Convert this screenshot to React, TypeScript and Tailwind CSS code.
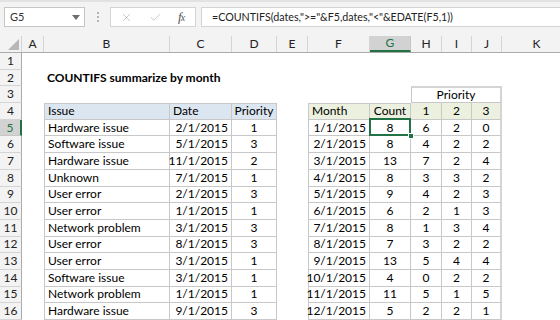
import { Check, X } from "lucide-react";

type Align = "left" | "center" | "right";

const COLS = ["A", "B", "C", "D", "E", "F", "G", "H", "I", "J", "K"];
const GRID =
  "grid grid-cols-[22px_22px_126px_62px_45px_31px_62px_41px_31px_30px_30px_70px]";

const issues: [string, string, number][] = [
  ["Hardware issue", "2/1/2015", 1],
  ["Software issue", "5/1/2015", 3],
  ["Hardware issue", "11/1/2015", 2],
  ["Unknown", "7/1/2015", 1],
  ["User error", "2/1/2015", 3],
  ["User error", "1/1/2015", 1],
  ["Network problem", "3/1/2015", 3],
  ["User error", "8/1/2015", 3],
  ["User error", "3/1/2015", 1],
  ["Software issue", "3/1/2015", 1],
  ["Network problem", "1/1/2015", 1],
  ["Hardware issue", "9/1/2015", 3],
];

const months: [string, number, number, number, number][] = [
  ["1/1/2015", 8, 6, 2, 0],
  ["2/1/2015", 8, 4, 2, 2],
  ["3/1/2015", 13, 7, 2, 4],
  ["4/1/2015", 8, 3, 3, 2],
  ["5/1/2015", 9, 4, 2, 3],
  ["6/1/2015", 6, 2, 1, 3],
  ["7/1/2015", 8, 1, 3, 4],
  ["8/1/2015", 7, 3, 2, 2],
  ["9/1/2015", 13, 5, 4, 4],
  ["10/1/2015", 4, 0, 2, 2],
  ["11/1/2015", 11, 5, 1, 5],
  ["12/1/2015", 5, 2, 2, 1],
];

const alignCls: Record<Align, string> = {
  left: "justify-start pl-[3px]",
  center: "justify-center",
  right: "justify-end pr-[3px]",
};

function Cell({
  children,
  align = "left",
  className = "",
}: {
  children?: React.ReactNode;
  align?: Align;
  className?: string;
}) {
  return (
    <div
      className={`relative flex items-center whitespace-nowrap min-w-0 leading-none ${alignCls[align]} ${className}`}
    >
      {children}
    </div>
  );
}

function RowHead({ n, active }: { n: number; active?: boolean }) {
  return (
    <div
      className={`flex items-center justify-center border-b text-[12px] leading-none ${
        active
          ? "bg-[#d2d2d2] text-[#217346] border-r-2 border-r-[#217346] border-b-[#c6c6c6]"
          : "bg-[#f3f3f3] text-[#222] border-r border-r-[#ababab] border-b-[#d4d4d4]"
      }`}
    >
      {n}
    </div>
  );
}

const B = "border-[#c8c8c8]";

function Row({ n, children, active }: { n: number; children: React.ReactNode; active?: boolean }) {
  return (
    <div className={`${GRID} h-[16.7px]`}>
      <RowHead n={n} active={active} />
      {children}
    </div>
  );
}

function Empty({ count }: { count: number }) {
  return (
    <>
      {Array.from({ length: count }).map((_, i) => (
        <Cell key={i} />
      ))}
    </>
  );
}

export default function App() {
  return (
    <div className="w-[560px] h-[320px] overflow-hidden bg-white font-['Lato',sans-serif] text-[12px] text-black">
      {/* formula bar */}
      <div className="h-[36px] bg-[#f3f3f3] border-t-2 border-[#e2e2e2] flex items-start pt-[5px]">
        <div className="ml-[4px] w-[81px] h-[20px] bg-white border border-[#c6c6c6] flex items-center justify-between pl-[5px] pr-[4px]">
          <span className="text-[11px] text-[#333]">G5</span>
          <svg width="8" height="5" viewBox="0 0 8 5">
            <path d="M0 0h8L4 5z" fill="#6d6d6d" />
          </svg>
        </div>
        <div className="w-[25px] h-[20px] flex flex-col items-center justify-center gap-[2px]">
          <span className="w-[2px] h-[2px] bg-[#b5b5b5]" />
          <span className="w-[2px] h-[2px] bg-[#b5b5b5]" />
          <span className="w-[2px] h-[2px] bg-[#b5b5b5]" />
        </div>
        <div className="w-[86px] h-[20px] bg-white border border-[#d4d4d4] flex items-center pl-[9px] gap-[16px] text-[#b3b3b3]">
          <X size={13} strokeWidth={1.3} />
          <Check size={13} strokeWidth={1.3} />
          <span className="font-['Liberation_Serif',serif] italic text-[13px] text-[#555] tracking-[-1px]">
            f<span className="text-[10px]">x</span>
          </span>
        </div>
        <div className="ml-[5px] flex-1 h-[20px] bg-white border border-[#d4d4d4] border-r-0 flex items-center pl-[10px] text-[10.7px] text-[#222]">
          =COUNTIFS(dates,"&gt;="&amp;F5,dates,"&lt;"&amp;EDATE(F5,1))
        </div>
      </div>

      {/* column headers */}
      <div className={`${GRID} h-[17px] bg-[#f3f3f3] border-b border-[#ababab] text-[12px] leading-none text-[#222]`}>
        <div className="flex items-end justify-end pr-[2px] pb-[2px] border-r border-[#d4d4d4]">
          <svg width="11" height="11" viewBox="0 0 11 11">
            <path d="M11 0V11H0z" fill="#b7b7b7" />
          </svg>
        </div>
        {COLS.map((c) => (
          <div
            key={c}
            className={`flex items-center justify-center border-r ${
              c === "G"
                ? "bg-[#d2d2d2] text-[#217346] border-[#c6c6c6] border-b-2 border-b-[#217346]"
                : "border-[#d4d4d4]"
            }`}
          >
            {c}
          </div>
        ))}
      </div>

      <Row n={1}>
        <Empty count={11} />
      </Row>
      <Row n={2}>
        <Cell />
        <Cell className="overflow-visible z-10 font-bold">COUNTIFS summarize by month</Cell>
        <Empty count={9} />
      </Row>
      <Row n={3}>
        <Empty count={7} />
        <Cell
          align="center"
          className={`col-span-3 border-t-2 border-l border-r-2 border-b ${B} border-t-[#d4d4d4] border-r-[#d4d4d4]`}
        >
          Priority
        </Cell>
        <Cell />
      </Row>
      <Row n={4}>
        <Cell />
        <Cell className={`bg-[#dce6f1] border-t border-l border-b border-r ${B}`}>Issue</Cell>
        <Cell className={`bg-[#dce6f1] border-t border-b border-r ${B}`}>Date</Cell>
        <Cell align="center" className={`bg-[#dce6f1] border-t border-b border-r ${B}`}>
          Priority
        </Cell>
        <Cell />
        <Cell className={`bg-[#ebf1de] border-t border-l border-b border-r ${B}`}>Month</Cell>
        <Cell align="center" className={`bg-[#ebf1de] border-t border-b border-r ${B}`}>
          Count
        </Cell>
        <Cell align="center" className={`bg-[#ebf1de] border-b border-r ${B}`}>1</Cell>
        <Cell align="center" className={`bg-[#ebf1de] border-b border-r ${B}`}>2</Cell>
        <Cell align="center" className={`bg-[#ebf1de] border-b border-r-2 ${B} border-r-[#d4d4d4]`}>
          3
        </Cell>
        <Cell />
      </Row>
      {issues.map(([issue, date, pr], i) => {
        const [m, cnt, p1, p2, p3] = months[i];
        const n = i + 5;
        const sel = n === 5;
        return (
          <Row key={n} n={n} active={sel}>
            <Cell />
            <Cell className={`border-l border-b border-r ${B}`}>{issue}</Cell>
            <Cell align="right" className={`border-b border-r ${B}`}>{date}</Cell>
            <Cell align="center" className={`border-b border-r ${B}`}>{pr}</Cell>
            <Cell />
            <Cell align="right" className={`border-l border-b border-r ${B}`}>{m}</Cell>
            <Cell align="center" className={`border-b border-r ${B}`}>
              {cnt}
              {sel && (
                <>
                  <div className="absolute -left-px -top-[2px] -right-[1px] -bottom-px border-2 border-[#217346]" />
                  <div className="absolute -right-[4px] -bottom-[4px] w-[6px] h-[6px] bg-[#217346] border border-white z-10" />
                </>
              )}
            </Cell>
            <Cell align="center" className={`border-b border-r ${B}`}>{p1}</Cell>
            <Cell align="center" className={`border-b border-r ${B}`}>{p2}</Cell>
            <Cell align="center" className={`border-b border-r-2 ${B} border-r-[#d4d4d4]`}>
              {p3}
            </Cell>
            <Cell />
          </Row>
        );
      })}
    </div>
  );
}
